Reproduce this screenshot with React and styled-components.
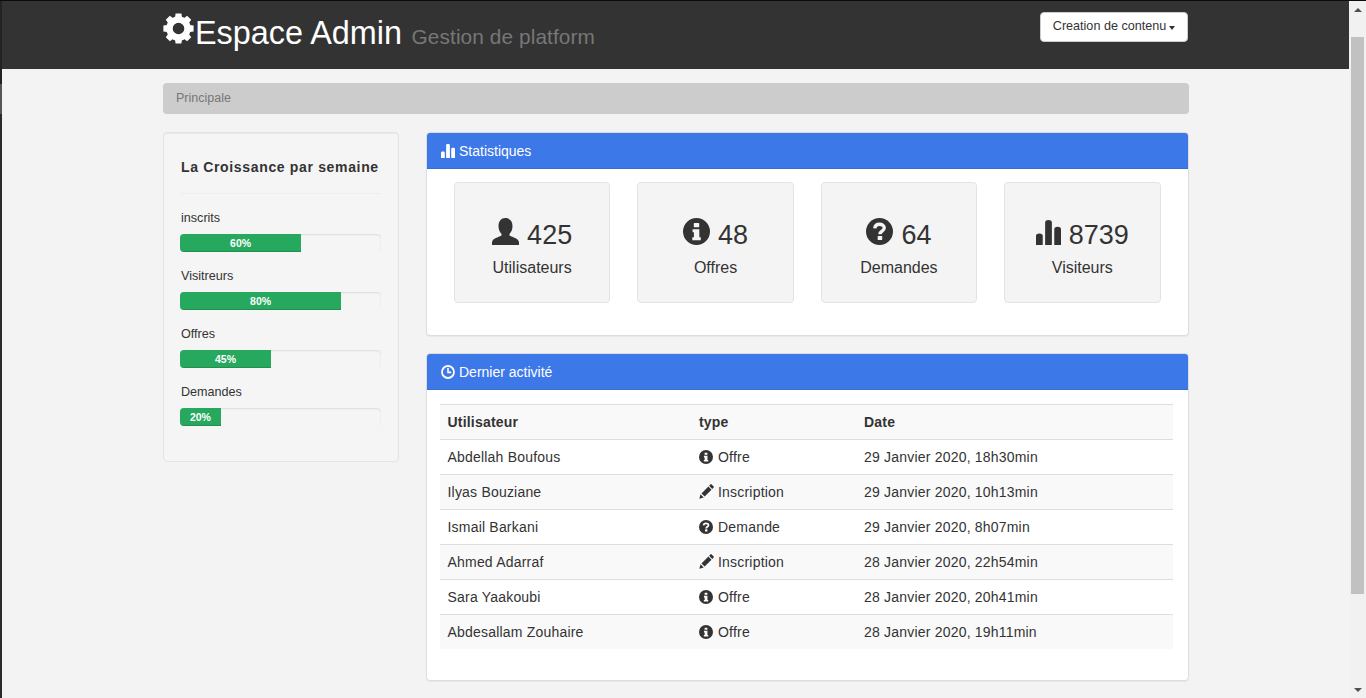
import React from "react";
import styled, { createGlobalStyle } from "styled-components";

const Global = createGlobalStyle`
  html, body { margin: 0; padding: 0; height: 100%; background: #f3f3f3; overflow: hidden; }
  * { box-sizing: border-box; }
  body { font-family: "Liberation Sans", Arial, sans-serif; font-size: 14px; line-height: 20px; color: #333; }
`;

const Viewport = styled.div`display: flex; flex-direction: column; width: 1366px; height: 698px; overflow: hidden;`;
const TopLine = styled.div`height: 1px; flex: none; background: #0c0c0c;`;
const Frame = styled.div`display: flex; flex: 1; min-height: 0;`;
const WindowEdge = styled.div`
  width: 2px; flex: none;
  background: linear-gradient(#232323 0 83px, #555 83px 113px, #2a2a2a 113px);
`;
const Page = styled.div`flex: 1; min-width: 0; background: #f3f3f3;`;
const Header = styled.header`height: 68px; background: #333; padding: 0 161px; display: flex; justify-content: space-between; align-items: flex-start;`;
const Brand = styled.h1`
  margin: 12px 0 0; display: flex; align-items: flex-start; font-size: 32.4px; line-height: 40px; font-weight: 400; color: #fff;
`;
const BrandIcon = styled.svg`width: 31px; height: 31px; fill: #fff; margin-right: 1px; flex: none;`;
const BrandText = styled.span`display: block; white-space: nowrap;`;
const Subtitle = styled.small`font-size: 20.8px; color: #777; margin-left: 9.5px; letter-spacing: .1px;`;
const MenuButton = styled.button`
  margin-top: 11px; width: 148px; height: 30px; padding: 0 0 2px; background: #fff; border: 1px solid #ccc; border-radius: 4px;
  font: 12.6px/18px "Liberation Sans", Arial, sans-serif; color: #333; display: flex; align-items: center; justify-content: center; gap: 3px;
`;
const Caret = styled.span`width: 0; height: 0; border-top: 4px solid #333; border-left: 3.5px solid transparent; border-right: 3.5px solid transparent; margin-top: 3px;`;
const Container = styled.main`margin-left: 161px; width: 1026px; padding-top: 14px;`;
const Breadcrumb = styled.div`height: 31px; background: #ccc; border-radius: 4px; padding: 5px 13px; font-size: 12.5px; color: #777; margin-bottom: 18px;`;
const Columns = styled.div`display: grid; grid-template-columns: 236px 763px; column-gap: 27px; align-items: start;`;
const Well = styled.aside`
  height: 330px; background: #f5f5f5; border: 1px solid #e3e3e3; border-radius: 4px; padding: 24px 17px 0 16.4px;
  box-shadow: inset 0 1px 1px rgba(0,0,0,.05);
`;
const WellTitle = styled.h4`
  margin: 0 0 13px; padding: 0 0 16px 0.6px; font-size: 14px; line-height: 20px; font-weight: 700; border-bottom: 1px solid #eee; letter-spacing: .66px; white-space: nowrap;
`;
const Metric = styled.div`margin-bottom: 13px;`;
const MetricLabel = styled.div`font-size: 12.6px; line-height: 22px; height: 20px; margin-bottom: 7px; padding-left: 0.6px;`;
const Track = styled.div`height: 18px; background: #f5f5f5; border-radius: 4px; overflow: hidden; box-shadow: inset 0 1px 2px rgba(0,0,0,.1);`;
const Fill = styled.div`
  height: 100%; background: #26a95f; color: #fff; font-size: 10.5px; font-weight: 700; line-height: 18px; text-align: center;
  box-shadow: inset 0 -1px 0 rgba(0,0,0,.15);
`;
const Stack = styled.div`display: flex; flex-direction: column; gap: 17px;`;
const Panel = styled.section`
  background: #fff; border: 1px solid #ddd; border-radius: 4px; box-shadow: 0 1px 1px rgba(0,0,0,.05); height: ${p => p.$h}px; overflow: hidden;
`;
const PanelHeading = styled.div`
  height: 36px; background: #3c78e8; color: #fff; font-size: 14px; line-height: 36px; padding-left: 14px; display: flex; align-items: center; gap: 4px;
  box-shadow: inset 0 -1px 0 rgba(0,0,0,.08);
`;
const TileGrid = styled.div`display: grid; grid-template-columns: repeat(4, 156.5px); column-gap: 26.9px; padding: 13px 0 0 26.9px;`;
const Tile = styled.div`height: 121px; background: #f4f4f4; border: 1px solid #e3e3e3; border-radius: 4px; text-align: center; padding-top: 34px;`;
const TileValue = styled.div`display: flex; justify-content: center; align-items: flex-end; gap: 8px; height: 36px; font-size: 27px; line-height: 36px;`;
const TileLabel = styled.div`font-size: 16px; line-height: 22px; margin-top: 4px;`;
const TableWrap = styled.div`padding: 14px 15px 0 13px;`;
const Table = styled.table`width: 733px; border-collapse: collapse; table-layout: fixed; font-size: 14px; letter-spacing: .2px;`;
const Row = styled.tr`
  height: 35px; background: ${p => (p.$striped ? "#f9f9f9" : "#fff")};
  &:not(:last-child) { border-bottom: 1px solid #ddd; }
  tbody &:last-child { height: 34px; }
  th:first-child, td:first-child { padding-left: 7.5px; }
`;
const HeadRow = styled(Row)`border-top: 1px solid #ddd; border-bottom: 1px solid #ddd;`;
const Th = styled.th`width: ${p => p.$w || "auto"}; text-align: left; padding: 0 8px; font-weight: 700;`;
const Td = styled.td`padding: 0 8px; white-space: nowrap;`;
const TypeIcon = styled.span`display: inline-block; width: 15px; margin-right: 4px; vertical-align: -2px;`;
const Scrollbar = styled.div`width: 17px; flex: none; background: #f1f1f1; display: flex; flex-direction: column; align-items: center;`;
const Arrow = styled.span`
  height: 17px; display: flex; align-items: center; justify-content: center; flex: none;
  &::before { content: ""; border-left: 4px solid transparent; border-right: 4px solid transparent;
    ${p => (p.$down ? "border-top: 4px solid #505050;" : "border-bottom: 4px solid #505050;")} }
`;
const Thumb = styled.div`width: 13.5px; height: 557px; background: #c1c1c1; margin-top: 19px; margin-bottom: auto;`;

const Svg = styled.svg`fill: ${p => p.$color || "#333"}; width: ${p => p.$s}px; height: ${p => p.$s}px; flex: none; display: block; margin-bottom: ${p => p.$mb || 0}px;`;

const Cog = () => (
  <BrandIcon viewBox="0 0 31 31">
    <circle cx="15.5" cy="15.5" r="9" fill="none" stroke="#fff" strokeWidth="6.4" />
    {[0, 45, 90, 135, 180, 225, 270, 315].map(a => (
      <path key={a} d="M12.6 0.4h5.8l.9 6h-7.6z" transform={`rotate(${a} 15.5 15.5)`} />
    ))}
  </BrandIcon>
);
const User = ({ s, mb }) => (
  <Svg $s={s} $mb={mb} viewBox="0 0 27 27">
    <path d="M13.5 0C9 0 6.5 3.5 6.5 8c0 3 1 6 3 8v1.5C6 19.5 1 20 0 24v3h27v-3c-1-4-6-4.500-9.500-6.500V16c2-2 3-5 3-8 0-4.500-2.500-8-7-8z" />
  </Svg>
);
const Info = ({ s, mb }) => (
  <Svg $s={s} $mb={mb} viewBox="0 0 24 24">
    <path fillRule="evenodd" d="M12 0a12 12 0 1 0 0 24 12 12 0 0 0 0-24zM10.200 4.500h3.600a.6.6 0 0 1 .6.6v2.500a.6.6 0 0 1-.6.6h-3.600a.6.6 0 0 1-.6-.6V5.100a.6.6 0 0 1 .6-.6zM8.500 10h6v7h1.300v2.700H8.300V17h1.400v-4.300H8.500z" />
  </Svg>
);
const Question = ({ s, mb }) => (
  <Svg $s={s} $mb={mb} viewBox="0 0 24 24">
    <mask id="qmark">
      <rect width="24" height="24" fill="#fff" />
      <path d="M7.800 9.300C8 6.600 9.800 5.600 12 5.600c2.500 0 4.200 1.300 4.200 3.200 0 3-3.800 2.800-3.800 5.600" fill="none" stroke="#000" strokeWidth="3" />
      <rect x="10.400" y="16" width="4" height="3.600" rx=".5" fill="#000" />
    </mask>
    <circle cx="12" cy="12" r="12" mask="url(#qmark)" />
  </Svg>
);
const Bars = ({ s, mb, color }) => (
  <Svg $s={s} $mb={mb} $color={color} viewBox="0 0 26 26">
    <path d="M0 26V16.500C0 15 1 14 3.500 14S7 15 7 16.500V26zM9.500 26V2.500C9.500 1 10.500 0 13 0s3.500 1 3.500 2.500V26zM19 26V9.500C19 8 20 7 22.500 7S26 8 26 9.500V26z" />
  </Svg>
);
const Clock = () => (
  <Svg $s={14} viewBox="0 0 14 14" $color="none">
    <circle cx="7" cy="7" r="6" stroke="#fff" strokeWidth="1.800" />
    <path d="M7 3v4.400h3.200" stroke="#fff" strokeWidth="1.600" />
  </Svg>
);
const Pencil = () => (
  <Svg $s={15} viewBox="0 0 24 24">
    <path d="M.5 23.500 2.500 16.500 7.500 21.500zM4 15 15 4l5 5L9 20zM16.200 2.800 18.500.5a1 1 0 0 1 1.400 0l3.600 3.600a1 1 0 0 1 0 1.400L21.200 7.800z" />
  </Svg>
);

const metrics = [["inscrits", 60], ["Visitreurs", 80], ["Offres", 45], ["Demandes", 20]];
const tiles = [
  [<User s={27} key="u" mb={8} />, "425", "Utilisateurs"],
  [<Info s={27} key="i" mb={8} />, "48", "Offres"],
  [<Question s={27} key="q" mb={8} />, "64", "Demandes"],
  [<Bars s={25} key="b" mb={8} />, "8739", "Visiteurs"],
];
const types = {
  Offre: <Info s={14} />,
  Inscription: <Pencil />,
  Demande: <Question s={14} />,
};
const rows = [
  ["Abdellah Boufous", "Offre", "29 Janvier 2020, 18h30min"],
  ["Ilyas Bouziane", "Inscription", "29 Janvier 2020, 10h13min"],
  ["Ismail Barkani", "Demande", "29 Janvier 2020, 8h07min"],
  ["Ahmed Adarraf", "Inscription", "28 Janvier 2020, 22h54min"],
  ["Sara Yaakoubi", "Offre", "28 Janvier 2020, 20h41min"],
  ["Abdesallam Zouhaire", "Offre", "28 Janvier 2020, 19h11min"],
];

export default function App() {
  return (
    <Viewport>
      <Global />
      <TopLine />
      <Frame>
        <WindowEdge />
        <Page>
          <Header>
            <Brand>
              <Cog />
              <BrandText>
                Espace Admin
                <Subtitle>Gestion de platform</Subtitle>
              </BrandText>
            </Brand>
            <MenuButton>Creation de contenu <Caret /></MenuButton>
          </Header>
          <Container>
            <Breadcrumb>Principale</Breadcrumb>
            <Columns>
              <Well>
                <WellTitle>La Croissance par semaine</WellTitle>
                {metrics.map(([label, v]) => (
                  <Metric key={label}>
                    <MetricLabel>{label}</MetricLabel>
                    <Track><Fill style={{ width: `${v}%` }}>{v}%</Fill></Track>
                  </Metric>
                ))}
              </Well>
              <Stack>
                <Panel $h={204}>
                  <PanelHeading><Bars s={14} color="#fff" />Statistiques</PanelHeading>
                  <TileGrid>
                    {tiles.map(([icon, value, label]) => (
                      <Tile key={label}>
                        <TileValue>{icon}{value}</TileValue>
                        <TileLabel>{label}</TileLabel>
                      </Tile>
                    ))}
                  </TileGrid>
                </Panel>
                <Panel $h={328}>
                  <PanelHeading><Clock />Dernier activité</PanelHeading>
                  <TableWrap>
                    <Table>
                      <thead>
                        <HeadRow $striped>
                          <Th $w="251px">Utilisateur</Th>
                          <Th $w="165px">type</Th>
                          <Th>Date</Th>
                        </HeadRow>
                      </thead>
                      <tbody>
                        {rows.map(([name, type, date], i) => (
                          <Row key={name} $striped={i % 2 === 1}>
                            <Td>{name}</Td>
                            <Td><TypeIcon>{types[type]}</TypeIcon>{type}</Td>
                            <Td>{date}</Td>
                          </Row>
                        ))}
                      </tbody>
                    </Table>
                  </TableWrap>
                </Panel>
              </Stack>
            </Columns>
          </Container>
        </Page>
        <Scrollbar>
          <Arrow />
          <Thumb />
          <Arrow $down />
        </Scrollbar>
      </Frame>
    </Viewport>
  );
}
